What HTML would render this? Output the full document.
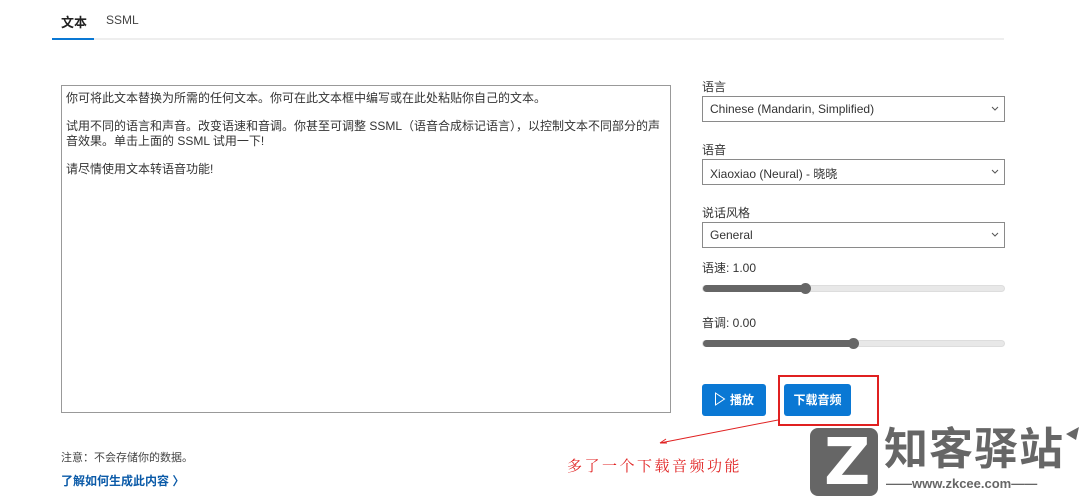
<!DOCTYPE html>
<html><head><meta charset="utf-8"><style>
*{margin:0;padding:0;box-sizing:border-box}
body{width:1080px;height:493px;background:#fff;position:relative;overflow:hidden;font-family:"Liberation Sans","Noto Sans CJK SC",sans-serif;color:#333}
.a{position:absolute}
.t{font-size:12px;color:#333}
.sel{position:absolute;left:702px;width:303px;height:26px;border:1px solid #8a8a8a;font-size:12px;padding:5px 0 0 7px;color:#333}
.sel svg{position:absolute;right:5px;top:9px}
.track{position:absolute;left:702px;width:303px;height:7px;border-radius:4px;background:#e8e8e8;border:1px solid #ddd}
.fill{position:absolute;left:0;top:-1px;height:7px;background:#666;border-radius:4px}
.thumb{position:absolute;width:11px;height:11px;border-radius:50%;background:#666}
.btn{position:absolute;top:384px;height:32px;background:#0a78d4;border-radius:3px;color:#fff;font-size:12px;font-weight:bold;text-align:center;line-height:32px}
.ta p{margin-bottom:13px}
</style></head><body>
<div class="a" style="left:61px;top:12px;font-size:13px;font-weight:bold;color:#222">文本</div>
<div class="a" style="left:106px;top:13px;font-size:12px;color:#444">SSML</div>
<div class="a" style="left:52px;top:38px;width:952px;height:2px;background:#eee"></div>
<div class="a" style="left:52px;top:38px;width:42px;height:2px;background:#0a78d4"></div>

<div class="a ta" style="left:61px;top:85px;width:610px;height:328px;border:1px solid #999;padding:5px 4px;font-size:12px;line-height:15px;color:#333"><p>你可将此文本替换为所需的任何文本。你可在此文本框中编写或在此处粘贴你自己的文本。</p><p>试用不同的语言和声音。改变语速和音调。你甚至可调整 SSML（语音合成标记语言），以控制文本不同部分的声音效果。单击上面的 SSML 试用一下!</p><p>请尽情使用文本转语音功能!</p></div>

<div class="a t" style="left:702px;top:78px">语言</div>
<div class="sel" style="top:96px">Chinese (Mandarin, Simplified)<svg width="8" height="6"><path d="M1 1l3 3 3-3" stroke="#555" fill="none"/></svg></div>
<div class="a t" style="left:702px;top:141px">语音</div>
<div class="sel" style="top:159px">Xiaoxiao (Neural) - 晓晓<svg width="8" height="6"><path d="M1 1l3 3 3-3" stroke="#555" fill="none"/></svg></div>
<div class="a t" style="left:702px;top:204px">说话风格</div>
<div class="sel" style="top:222px">General<svg width="8" height="6"><path d="M1 1l3 3 3-3" stroke="#555" fill="none"/></svg></div>
<div class="a t" style="left:702px;top:259px">语速: 1.00</div>
<div class="track" style="top:285px"><div class="fill" style="width:103px"></div><div class="thumb" style="left:97px;top:-3px"></div></div>
<div class="a t" style="left:702px;top:314px">音调: 0.00</div>
<div class="track" style="top:340px"><div class="fill" style="width:151px"></div><div class="thumb" style="left:145px;top:-3px"></div></div>

<div class="btn" style="left:702px;width:64px"><svg width="12" height="14" style="vertical-align:-2px;margin-right:4px"><path d="M1.5 1v12l9-6z" stroke="#fff" fill="none"/></svg>播放</div>
<div class="btn" style="left:784px;width:67px">下载音频</div>
<div class="a" style="left:778px;top:375px;width:101px;height:51px;border:2px solid #e02020"></div>
<svg class="a" style="left:650px;top:410px" width="140" height="40"><path d="M128 10L10 33" stroke="#e02020" stroke-width="1"/><path d="M10 33l6-4M10 33l7 0" stroke="#e02020"/></svg>
<div class="a" style="left:567px;top:455px;font-size:15px;color:#e02020;letter-spacing:2.5px;font-family:'Noto Serif CJK SC',serif">多了一个下载音频功能</div>

<div class="a" style="left:61px;top:449px;font-size:11px;color:#444">注意：不会存储你的数据。</div>
<div class="a" style="left:61px;top:472px;font-size:12px;color:#0a5aa8;font-weight:bold">了解如何生成此内容 〉</div>

<div class="a" style="left:810px;top:428px;width:68px;height:68px;background:#666;border-radius:8px"></div>
<div class="a" style="left:824px;top:428px;font-size:64px;font-weight:bold;color:#fff;line-height:70px;font-family:'DejaVu Sans',sans-serif">Z</div>
<div class="a" style="left:884px;top:424px;font-size:44px;font-weight:bold;color:#666;line-height:52px;letter-spacing:1px">知客驿站</div>
<svg class="a" style="left:1064px;top:426px" width="16" height="16"><path d="M2 8L15 1 12 14z" fill="#666"/></svg>
<div class="a" style="left:886px;top:476px;font-size:13px;font-weight:bold;color:#666;white-space:nowrap">——www.zkcee.com——</div>
</body></html>
